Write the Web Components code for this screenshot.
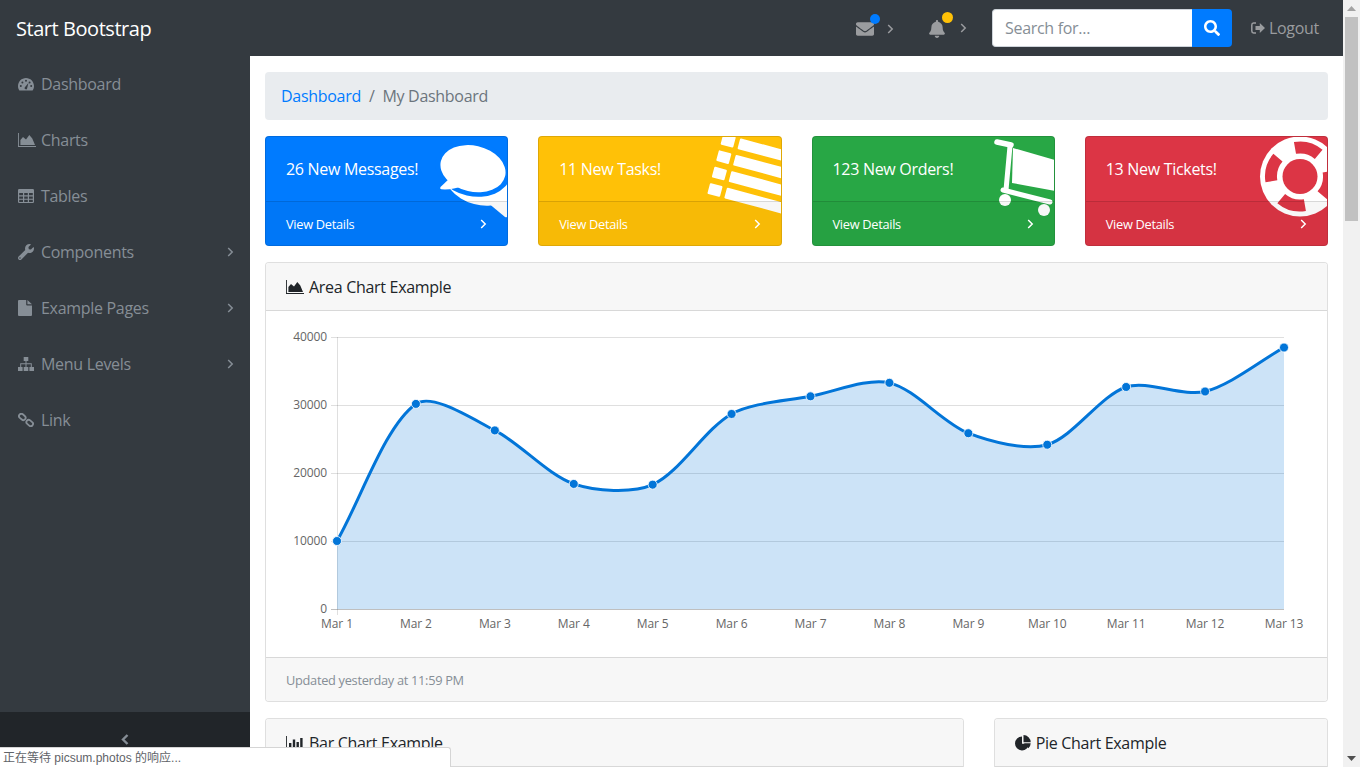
<!DOCTYPE html>
<html lang="en">
<head>
<meta charset="utf-8">
<title>Start Bootstrap</title>
<style>
  html, body { margin: 0; height: 100%; overflow: hidden; }
  body { font-family: "Open Sans", "Noto Sans", sans-serif; color: #212529; background: #fff; }
</style>
</head>
<body>
<admin-app></admin-app>

<script>
const ICONS = {
  dashboard: `<svg viewBox="0 0 16 14" width="16" height="14"><path fill-rule="evenodd" fill="currentColor" d="M8 1C3.6 1 0 4.6 0 9c0 1.7.5 3.3 1.4 4.6h13.2C15.5 12.3 16 10.7 16 9c0-4.4-3.6-8-8-8zM1.8 9a1 1 0 1 0 2 0a1 1 0 1 0-2 0zM3.4 5.5a1 1 0 1 0 2 0a1 1 0 1 0-2 0zM7 3.8a1 1 0 1 0 2 0a1 1 0 1 0-2 0zM10.6 5.5a1 1 0 1 0 2 0a1 1 0 1 0-2 0zM12.2 9a1 1 0 1 0 2 0a1 1 0 1 0-2 0zM6.7 10.6a1.3 1.3 0 1 0 2.5.5L10.4 6z"/></svg>`,
  area: `<svg viewBox="0 0 18 14" width="18" height="14"><path fill="currentColor" d="M0 0h.9v13H18v1H0zM2.4 12V7l2.6-3 3 2.6L11.300 2l3 3.600L17 12z"/></svg>`,
  table: `<svg viewBox="0 0 16 14" width="16" height="14"><path fill-rule="evenodd" fill="currentColor" d="M1.200 0h13.600A1.200 1.200 0 0 1 16 1.200v11.600a1.200 1.200 0 0 1-1.200 1.200H1.200A1.200 1.200 0 0 1 0 12.800V1.200A1.200 1.200 0 0 1 1.200 0zM1.200 4v2.300h3.800V4zM6.200 4v2.300h3.600V4zM11 4v2.300h3.800V4zM1.200 7.400v2.300h3.800V7.400zM6.200 7.400v2.300h3.600V7.400zM11 7.400v2.300h3.800V7.400zM1.200 10.700v2.200h3.800v-2.200zM6.200 10.700v2.200h3.600v-2.200zM11 10.700v2.200h3.800v-2.200z"/></svg>`,
  wrench: `<svg viewBox="0 0 512 512" width="16" height="16"><path fill="currentColor" d="M507.730 109.100c-2.240-9.030-13.540-12.090-20.120-5.510l-74.360 74.360-67.880-11.310-11.310-67.880 74.360-74.360c6.620-6.620 3.430-17.900-5.660-20.160-47.380-11.740-99.550.91-136.580 37.930-39.640 39.640-50.550 97.100-34.050 147.200L18.740 402.760c-24.990 24.990-24.990 65.510 0 90.500 24.990 24.990 65.510 24.990 90.500 0l213.210-213.210c50.120 16.710 107.470 5.680 147.370-34.220 37.070-37.070 49.700-89.320 37.910-136.730zM64 472c-13.250 0-24-10.750-24-24 0-13.260 10.750-24 24-24s24 10.740 24 24c0 13.250-10.750 24-24 24z"/></svg>`,
  file: `<svg viewBox="0 0 14 16" width="14" height="16"><path fill="currentColor" d="M0 1a1 1 0 0 1 1-1h7.200v4.600a.9.900 0 0 0 .9.900H14V15a1 1 0 0 1-1 1H1a1 1 0 0 1-1-1zM9.400 0L14 4.300H9.400z"/></svg>`,
  sitemap: `<svg viewBox="0 0 16 14" width="16" height="14"><path fill="currentColor" d="M5.700 0h4.600v4H8.500v2.300h5.300V10H16v4h-4.600v-4h1.400V7.300H8.500V10h1.800v4H5.700v-4h1.800V7.300H3.200V10h1.400v4H0v-4h2.200V6.300h5.300V4H5.700z"/></svg>`,
  link: `<svg viewBox="0 0 16 14" width="16" height="14"><g fill="none" stroke="currentColor" stroke-width="1.800"><rect x="-3.600" y="-2.300" width="7.200" height="4.600" rx="2.300" transform="translate(4.300 3.900) rotate(40)"/><rect x="-3.600" y="-2.300" width="7.200" height="4.600" rx="2.300" transform="translate(11.700 10) rotate(40)"/></g></svg>`,
  envelope: `<svg viewBox="0 0 512 512" width="18" height="18"><path fill="currentColor" d="M502.300 190.800c3.900-3.100 9.700-.2 9.700 4.700V400c0 26.500-21.500 48-48 48H48c-26.500 0-48-21.500-48-48V195.600c0-5 5.700-7.800 9.700-4.700 22.400 17.400 52.100 39.500 154.100 113.600 21.100 15.400 56.700 47.800 92.200 47.600 35.700.3 72-32.800 92.300-47.600 102-74.100 131.600-96.300 154-113.700zM256 320c23.200.4 56.600-29.200 73.400-41.400 132.700-96.300 142.800-104.700 173.400-128.700 5.800-4.500 9.200-11.500 9.200-18.900v-19c0-26.500-21.500-48-48-48H48C21.500 64 0 85.500 0 112v19c0 7.400 3.400 14.300 9.200 18.900 30.600 23.900 40.700 32.400 173.400 128.700 16.800 12.200 50.200 41.800 73.400 41.400z"/></svg>`,
  bell: `<svg viewBox="0 0 448 512" width="16" height="18"><path fill="currentColor" d="M224 512c35.320 0 63.970-28.650 63.970-64H160.030c0 35.350 28.650 64 63.970 64zm215.390-149.710c-19.320-20.760-55.470-51.990-55.470-154.290 0-77.700-54.480-139.900-127.940-155.160V32c0-17.670-14.320-32-31.980-32s-31.980 14.330-31.980 32v20.840C118.560 68.100 64.080 130.300 64.080 208c0 102.300-36.150 133.530-55.470 154.290-6 6.450-8.660 14.160-8.610 21.710.11 16.400 12.980 32 32.100 32h383.800c19.120 0 32-15.600 32.100-32 .05-7.550-2.610-15.270-8.610-21.710z"/></svg>`,
  search: `<svg viewBox="0 0 512 512" width="16" height="16"><path fill="currentColor" d="M505 442.700L405.300 343c-4.500-4.500-10.600-7-17-7H372c27.600-35.300 44-79.700 44-128C416 93.100 322.900 0 208 0S0 93.100 0 208s93.100 208 208 208c48.300 0 92.700-16.400 128-44v16.300c0 6.400 2.500 12.500 7 17l99.700 99.700c9.400 9.400 24.600 9.400 33.900 0l28.300-28.300c9.400-9.400 9.400-24.600.1-34zM208 336c-70.700 0-128-57.200-128-128 0-70.700 57.200-128 128-128 70.700 0 128 57.200 128 128 0 70.700-57.200 128-128 128z"/></svg>`,
  logout: `<svg viewBox="0 0 14 12" width="14" height="12"><path fill="none" stroke="currentColor" stroke-width="1.500" d="M5 1H2.600A1.900 1.900 0 0 0 .8 2.900v6.200A1.900 1.900 0 0 0 2.600 11H5"/><path fill="currentColor" d="M4.500 4h4.300V.9L14 6l-5.200 5.100V8H4.500z"/></svg>`,
  right: `<svg viewBox="0 0 7 10" width="7" height="10"><path fill="none" stroke="currentColor" stroke-width="1.500" d="M1.200 1l4 4-4 4"/></svg>`,
  left: `<svg viewBox="0 0 8 11" width="8" height="11"><path fill="none" stroke="currentColor" stroke-width="2.400" d="M6.500 1L2 5.500 6.500 10"/></svg>`,
  bars: `<svg viewBox="0 0 18 14" width="18" height="14"><path fill="currentColor" d="M0 0h.9v13H18v1H0zM3 7h2.400v5H3zM6.800 3.500h2.400V12H6.800zM10.500 6h2.400v6h-2.400zM14.200 2h2.400v10h-2.400z"/></svg>`,
  pie: `<svg viewBox="0 0 16 16" width="16" height="16"><path fill="currentColor" d="M7 1.500a7 7 0 1 0 7 7.300H7zM8.500 0v7.200h7.200A7.300 7.300 0 0 0 8.500 0zM15.700 8.300H9l4.400 5a7 7 0 0 0 2.300-5z"/></svg>`
};

// big tilted pictures behind the stat cards, coordinates are relative to the card
const CARD_ART = {
  comments: (bg) => `
    <ellipse cx="216" cy="42" rx="37" ry="27" transform="rotate(15 216 42)" fill="#fff"/>
    <path fill="#fff" d="M222 66L240 81q3 1 3-3V58z"/>
    <ellipse cx="208" cy="32.700" rx="38" ry="27.500" transform="rotate(13 208 32.700)" fill="${bg}"/>
    <ellipse cx="208" cy="32.700" rx="33" ry="23" transform="rotate(13 208 32.700)" fill="#fff"/>
    <path fill="#fff" d="M185 42L175.500 51q-1 2 1 2.300Q188 54 197 50z"/>`,
  tasks: () => {
    const rows = [0, 1, 2, 3].map((k) => `
      <rect x="-6.500" y="${-5.5 - 17 * k}" width="13" height="11" rx="1"/>
      <rect x="11" y="${-5.5 - 17 * k}" width="80" height="11" rx="1"/>`).join('');
    return `<g fill="#fff" transform="translate(177 54) rotate(15)">${rows}</g>`;
  },
  cart: () => `
    <g fill="none" stroke="#fff" stroke-linecap="round">
      <path stroke-width="5.500" d="M185 6L199 9"/>
      <path stroke-width="5" d="M198 10L194 54"/>
      <path stroke-width="5" d="M191 54L238 66"/>
    </g>
    <path fill="#fff" d="M201 12L243 24V55L200 47z"/>
    <circle cx="193" cy="64" r="6" fill="#fff"/>
    <circle cx="232" cy="74" r="6" fill="#fff"/>`,
  support: (bg) => `
    <circle cx="215" cy="40.500" r="40" fill="#fff"/>
    <circle cx="215" cy="40.500" r="29" fill="none" stroke="${bg}" stroke-width="12" stroke-dasharray="25.300 20.250" transform="rotate(-100 215 40.500)"/>
    <circle cx="215" cy="40.500" r="17.500" fill="${bg}"/>`
};

class AdminApp extends HTMLElement {
  connectedCallback() {
    this.attachShadow({ mode: 'open' });
    this.shadowRoot.innerHTML = `
      <style>
        :host { display: grid; grid-template-columns: 1fr 17px; height: 100vh; overflow: hidden; }
        .page { display: flex; flex-direction: column; min-width: 0; height: 100vh; }
        .main { flex: 1; display: flex; min-height: 0; }
      </style>
      <div class="page">
        <top-bar></top-bar>
        <div class="main">
          <side-nav>
            <nav-item icon="dashboard">Dashboard</nav-item>
            <nav-item icon="area">Charts</nav-item>
            <nav-item icon="table">Tables</nav-item>
            <nav-item icon="wrench" caret>Components</nav-item>
            <nav-item icon="file" caret>Example Pages</nav-item>
            <nav-item icon="sitemap" caret>Menu Levels</nav-item>
            <nav-item icon="link">Link</nav-item>
          </side-nav>
          <dash-board></dash-board>
        </div>
      </div>
      <scroll-track></scroll-track>
      <status-bubble>正在等待 picsum.photos 的响应...</status-bubble>
    `;
  }
}

class TopBar extends HTMLElement {
  connectedCallback() {
    this.attachShadow({ mode: 'open' });
    this.shadowRoot.innerHTML = `
      <style>
        :host { display: flex; align-items: center; height: 56px; background: #343a40; padding: 0 24px 0 16px; color: #9a9c9f; flex: none; }
        .brand { color: #fff; font-size: 20px; letter-spacing: -0.45px; margin-right: auto; }
        .alert { position: relative; display: flex; align-items: center; }
        .alert .ico { display: flex; }
        .alert .caret { display: flex; margin-left: 13px; margin-top: -1px; }
        .dot { position: absolute; width: 10px; height: 10px; border-radius: 50%; top: -6px; }
        .mail { margin-right: 35px; margin-top: 2px; }
        .mail .dot { left: 14px; background: #007bff; }
        .mail .caret { margin-left: 13px; }
        .bell { margin-right: 25px; margin-top: 1px; }
        .bell .dot { left: 13px; top: -8px; width: 11px; height: 11px; background: #ffc107; }
        .bell .caret { margin-left: 15px; }
        .search { display: flex; height: 38px; width: 240px; }
        .search input { width: 200px; box-sizing: border-box; border: 1px solid #ced4da; border-right: 0; border-radius: 4px 0 0 4px; padding: 6px 12px; font: inherit; font-size: 16px; letter-spacing: -0.3px; outline: 0; }
        .search input::placeholder { color: #868e96; opacity: 1; }
        .search button { width: 40px; border: 0; padding: 0; background: #007bff; color: #fff; border-radius: 0 4px 4px 0; display: flex; align-items: center; justify-content: center; }
        .logout { display: flex; align-items: center; gap: 4px; margin-left: 19px; font-size: 16px; letter-spacing: -0.3px; }
      </style>
      <span class="brand">Start Bootstrap</span>
      <div class="alert mail"><span class="ico">${ICONS.envelope}</span><span class="dot"></span><span class="caret">${ICONS.right}</span></div>
      <div class="alert bell"><span class="ico">${ICONS.bell}</span><span class="dot"></span><span class="caret">${ICONS.right}</span></div>
      <div class="search"><input placeholder="Search for..."><button aria-label="Search">${ICONS.search}</button></div>
      <span class="logout">${ICONS.logout}Logout</span>
    `;
  }
}

class SideNav extends HTMLElement {
  connectedCallback() {
    this.attachShadow({ mode: 'open' });
    this.shadowRoot.innerHTML = `
      <style>
        :host { display: flex; flex-direction: column; flex: none; width: 250px; background: #343a40; }
        .items { flex: 1; }
        .toggler { height: 55px; background: #212529; color: #868e96; display: flex; align-items: center; justify-content: center; }
      </style>
      <div class="items"><slot></slot></div>
      <div class="toggler">${ICONS.left}</div>
    `;
  }
}

class NavItem extends HTMLElement {
  connectedCallback() {
    this.attachShadow({ mode: 'open' });
    const caret = this.hasAttribute('caret') ? `<span class="caret">${ICONS.right}</span>` : '';
    this.shadowRoot.innerHTML = `
      <style>
        :host { display: flex; align-items: center; height: 56px; padding: 0 16px 0 17px; color: #868e96; font-size: 16px; letter-spacing: -0.3px; box-sizing: border-box; }
        .ico { width: 24px; display: flex; align-items: center; padding-left: 1px; box-sizing: border-box; }
        .caret { margin-left: auto; display: flex; padding-right: 0; }
      </style>
      <span class="ico">${ICONS[this.getAttribute('icon')]}</span>
      <slot></slot>
      ${caret}
    `;
  }
}

class DashBoard extends HTMLElement {
  connectedCallback() {
    this.attachShadow({ mode: 'open' });
    this.shadowRoot.innerHTML = `
      <style>
        :host { display: block; flex: 1; min-width: 0; padding: 16px 15px; overflow: hidden; box-sizing: border-box; background: #fff; }
        .crumbs { display: flex; gap: 8px; background: #e9ecef; border-radius: 4px; padding: 12px 16px; margin-bottom: 16px; line-height: 24px; font-size: 16px; letter-spacing: -0.3px; color: #6c757d; }
        .crumbs a { color: #007bff; }
        .stats { display: grid; grid-template-columns: repeat(4, 1fr); gap: 30px; margin-bottom: 16px; }
        .lower { display: grid; grid-template-columns: 698.670px 334.330px; gap: 30px; margin-top: 16px; }
      </style>
      <nav class="crumbs"><a>Dashboard</a><span>/</span><span>My Dashboard</span></nav>
      <div class="stats">
        <stat-card color="#007bff" art="comments">26 New Messages!</stat-card>
        <stat-card color="#ffc107" art="tasks">11 New Tasks!</stat-card>
        <stat-card color="#28a745" art="cart">123 New Orders!</stat-card>
        <stat-card color="#dc3545" art="support">13 New Tickets!</stat-card>
      </div>
      <panel-card icon="area" title="Area Chart Example" note="Updated yesterday at 11:59 PM"><area-chart></area-chart></panel-card>
      <div class="lower">
        <panel-card icon="bars" title="Bar Chart Example"><div style="height:300px"></div></panel-card>
        <panel-card icon="pie" title="Pie Chart Example"><div style="height:300px"></div></panel-card>
      </div>
    `;
  }
}

class StatCard extends HTMLElement {
  connectedCallback() {
    this.attachShadow({ mode: 'open' });
    const bg = this.getAttribute('color');
    this.shadowRoot.innerHTML = `
      <style>
        :host { display: block; position: relative; overflow: hidden; height: 110px; box-sizing: border-box; border: 1px solid rgba(0,0,0,.125); border-radius: 4px; color: #fff; background: ${bg}; }
        svg.art { position: absolute; left: -1px; top: -1px; width: 243px; height: 110px; }
        .title { position: relative; padding: 20px; line-height: 24px; font-size: 16px; letter-spacing: -0.3px; height: 64px; box-sizing: border-box; }
        .foot { position: relative; display: flex; justify-content: space-between; align-items: center; height: 44px; box-sizing: border-box; padding: 0 20px; border-top: 1px solid rgba(0,0,0,.125); background: rgba(0,0,0,.03); font-size: 12.800px; letter-spacing: -0.3px; }
        .foot span { display: flex; }
      </style>
      <svg class="art" viewBox="0 0 243 110">${CARD_ART[this.getAttribute('art')](bg)}</svg>
      <div class="title"><slot></slot></div>
      <div class="foot">View Details<span>${ICONS.right}</span></div>
    `;
  }
}

class PanelCard extends HTMLElement {
  connectedCallback() {
    this.attachShadow({ mode: 'open' });
    const note = this.getAttribute('note');
    this.shadowRoot.innerHTML = `
      <style>
        :host { display: block; border: 1px solid rgba(0,0,0,.125); border-radius: 4px; background: #fff; overflow: hidden; }
        header { display: flex; align-items: center; gap: 5px; height: 48px; box-sizing: border-box; padding: 0 20px; background: #f7f7f7; border-bottom: 1px solid rgba(0,0,0,.125); font-size: 16px; letter-spacing: -0.3px; color: #212529; }
        header span { display: flex; }
        footer { height: 44px; box-sizing: border-box; padding: 0 20px; display: flex; align-items: center; background: #f7f7f7; border-top: 1px solid rgba(0,0,0,.125); font-size: 12.800px; letter-spacing: -0.3px; color: #868e96; }
      </style>
      <header><span>${ICONS[this.getAttribute('icon')]}</span>${this.getAttribute('title')}</header>
      <slot></slot>
      ${note ? `<footer>${note}</footer>` : ''}
    `;
  }
}

class AreaChart extends HTMLElement {
  connectedCallback() {
    this.attachShadow({ mode: 'open' });
    const data = [10000, 30162, 26263, 18394, 18287, 28682, 31274, 33259, 25849, 24159, 32651, 31984, 38451];
    const left = 71, right = 1018, top = 26, bottom = 298, tension = 0.3;
    const pts = data.map((v, i) => ({
      x: left + (right - left) * i / (data.length - 1),
      y: bottom - (bottom - top) * v / 40000,
      label: 'Mar ' + (i + 1)
    }));

    // same control points as a chart.js line with lineTension
    const ctrl = pts.map((p, i) => {
      const a = pts[i - 1] || p, b = pts[i + 1] || p;
      const d1 = Math.hypot(p.x - a.x, p.y - a.y), d2 = Math.hypot(b.x - p.x, b.y - p.y);
      const s = d1 + d2 || 1;
      return {
        px: p.x - tension * d1 / s * (b.x - a.x), py: p.y - tension * d1 / s * (b.y - a.y),
        nx: p.x + tension * d2 / s * (b.x - a.x), ny: p.y + tension * d2 / s * (b.y - a.y)
      };
    });
    let line = `M${pts[0].x} ${pts[0].y}`;
    for (let i = 1; i < pts.length; i++) {
      line += `C${ctrl[i - 1].nx} ${ctrl[i - 1].ny} ${ctrl[i].px} ${ctrl[i].py} ${pts[i].x} ${pts[i].y}`;
    }

    const grid = [40000, 30000, 20000, 10000, 0].map((v, i) => {
      const y = top + i * 68 + 0.5;
      const stroke = v === 0 ? 'rgba(0,0,0,.25)' : 'rgba(0,0,0,.125)';
      return `<line x1="${left - 6}" x2="${right}" y1="${y}" y2="${y}" stroke="${stroke}"/>
        <text x="${left - 10}" y="${y + 3.5}" text-anchor="end">${v}</text>`;
    }).join('');

    this.shadowRoot.innerHTML = `
      <style>
        :host { display: block; height: 346px; }
        svg { display: block; width: 100%; height: 346px; }
        text { font-size: 12px; fill: #666; letter-spacing: -0.1px; }
      </style>
      <svg viewBox="0 0 1061 346">
        <line x1="${left + 0.5}" x2="${left + 0.5}" y1="${top}" y2="${bottom + 6}" stroke="rgba(0,0,0,.125)"/>
        ${grid}
        <path d="${line}L${right} ${bottom}L${left} ${bottom}z" fill="rgba(2,117,216,.2)"/>
        <path d="${line}" fill="none" stroke="#0275d8" stroke-width="3"/>
        ${pts.map((p) => `<circle cx="${p.x}" cy="${p.y}" r="4.500" fill="#0275d8" stroke="rgba(255,255,255,.8)"/>
          <text x="${p.x}" y="${bottom + 19}" text-anchor="middle">${p.label}</text>`).join('')}
      </svg>
    `;
  }
}

class ScrollTrack extends HTMLElement {
  connectedCallback() {
    this.attachShadow({ mode: 'open' });
    this.shadowRoot.innerHTML = `
      <style>
        :host { display: flex; flex-direction: column; align-items: center; height: 100vh; background: #f1f1f1; }
        .arrow { height: 17px; flex: none; display: flex; align-items: center; justify-content: center; }
        .thumb { width: 13px; height: 204px; flex: none; background: #c1c1c1; }
        .gap { flex: 1; }
      </style>
      <div class="arrow"><svg width="9" height="5"><path d="M4.500 0L9 5H0z" fill="#a3a3a3"/></svg></div>
      <div class="thumb"></div>
      <div class="gap"></div>
      <div class="arrow"><svg width="9" height="5"><path d="M0 0h9L4.500 5z" fill="#505050"/></svg></div>
    `;
  }
}

class StatusBubble extends HTMLElement {
  connectedCallback() {
    this.attachShadow({ mode: 'open' });
    this.shadowRoot.innerHTML = `
      <style>
        :host { position: fixed; left: 0; bottom: 0; width: 451px; height: 20px; box-sizing: border-box; padding-left: 3px; background: #fff; border: 1px solid #d5d5d5; border-width: 1px 1px 0 0; border-top-right-radius: 3px; font: 12px/20px "Liberation Sans", "Noto Sans CJK SC", sans-serif; color: #5f6368; white-space: nowrap; }
      </style>
      <slot></slot>
    `;
  }
}

customElements.define('admin-app', AdminApp);
customElements.define('top-bar', TopBar);
customElements.define('side-nav', SideNav);
customElements.define('nav-item', NavItem);
customElements.define('dash-board', DashBoard);
customElements.define('stat-card', StatCard);
customElements.define('panel-card', PanelCard);
customElements.define('area-chart', AreaChart);
customElements.define('scroll-track', ScrollTrack);
customElements.define('status-bubble', StatusBubble);
</script>
</body>
</html>
